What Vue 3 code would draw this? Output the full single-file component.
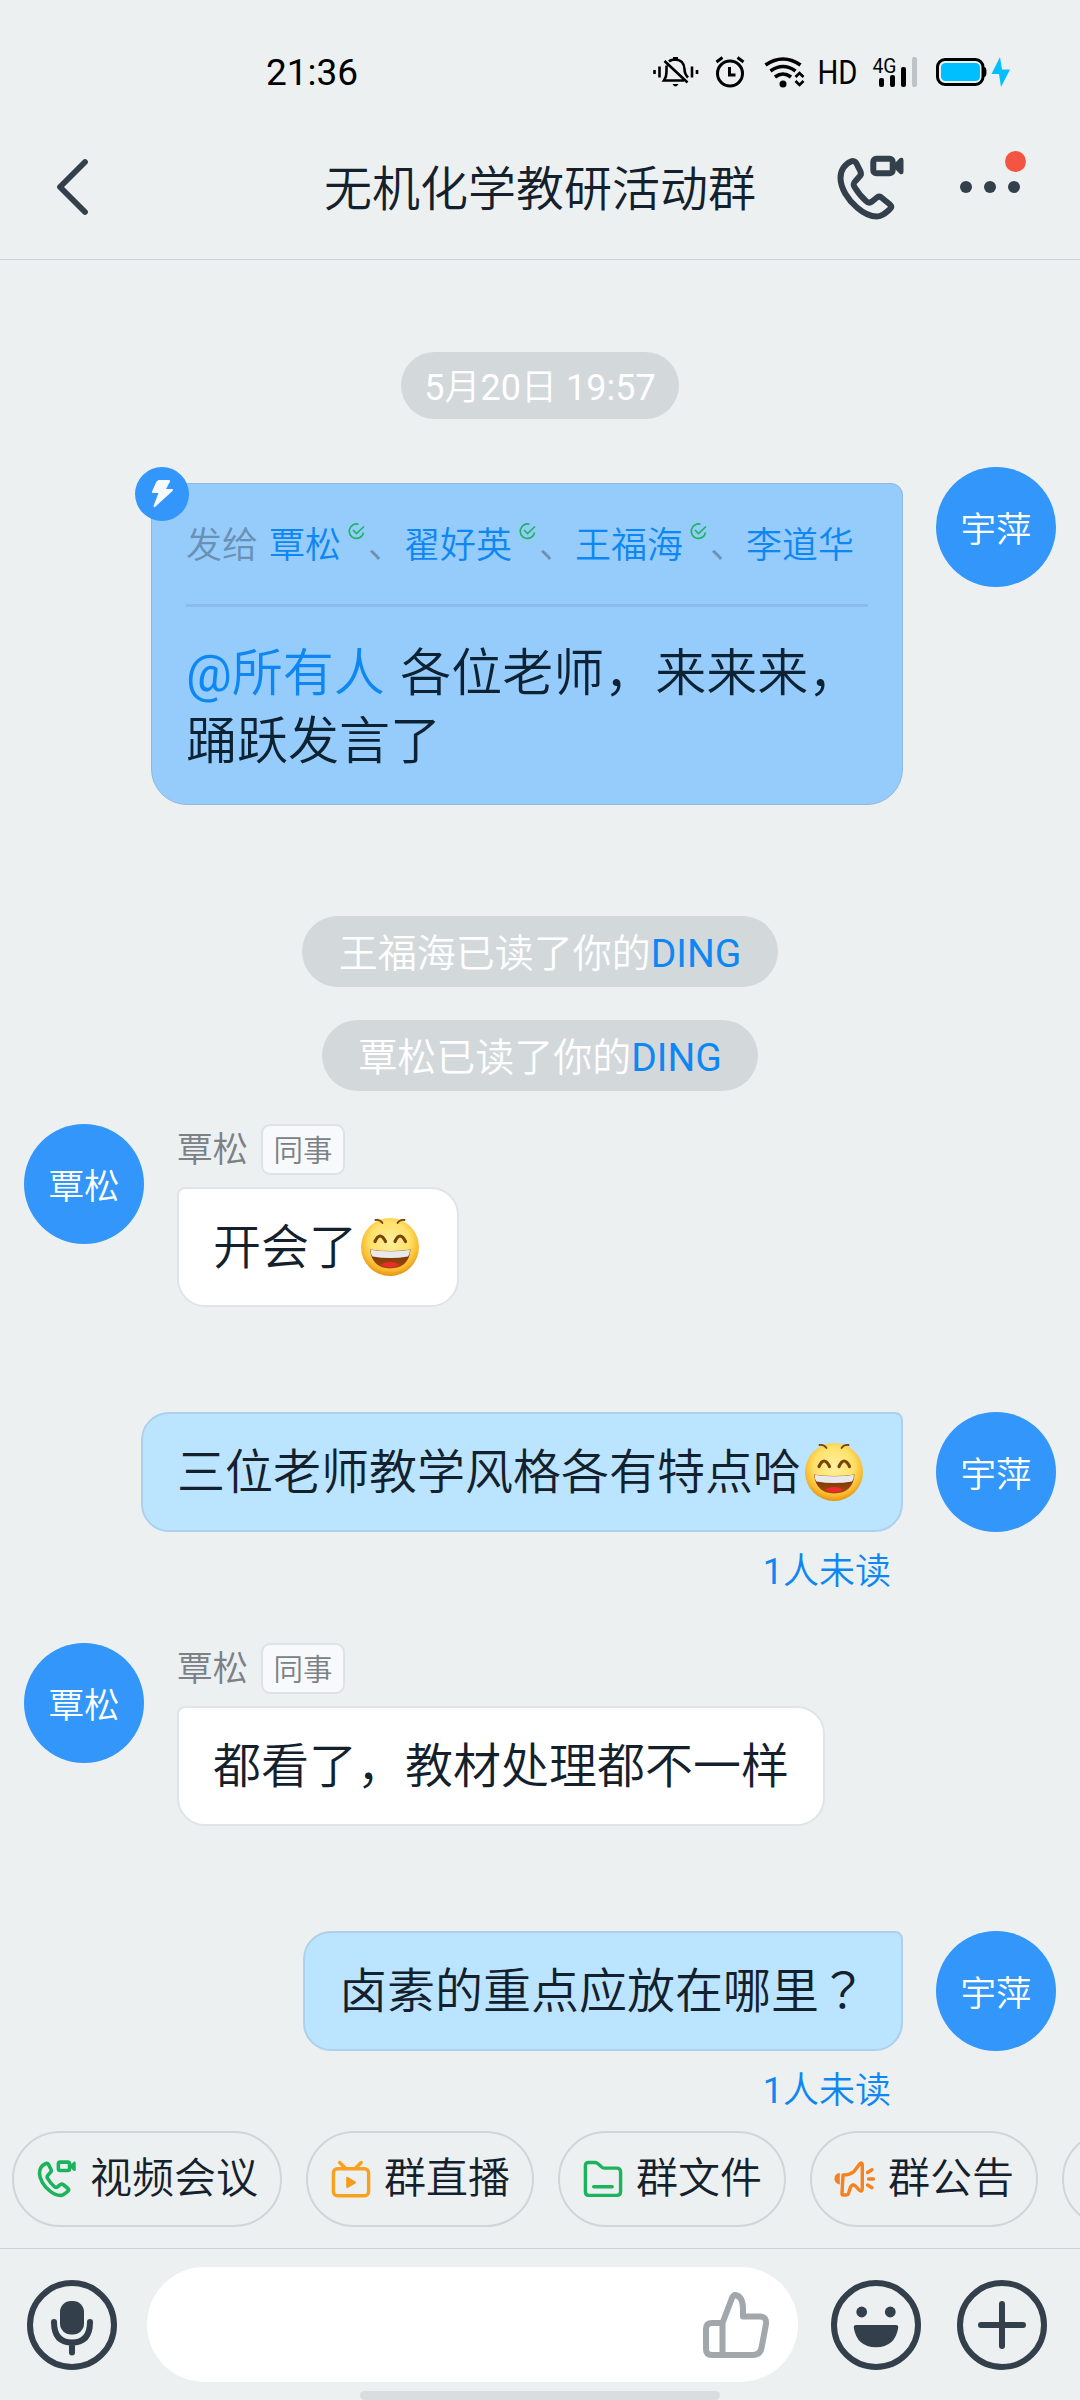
<script setup>
const recipients = [
  { name: '覃松', read: true },
  { name: '翟好英', read: true },
  { name: '王福海', read: true },
  { name: '李道华', read: false },
]

const notices = ['王福海已读了你的', '覃松已读了你的']

const messages = [
  { mine: false, name: '覃松', text: '开会了', emoji: true },
  { mine: true, name: '宇萍', text: '三位老师教学风格各有特点哈', emoji: true },
  { mine: false, name: '覃松', text: '都看了，教材处理都不一样', emoji: false },
  { mine: true, name: '宇萍', text: '卤素的重点应放在哪里', mark: '？', emoji: false },
]

const actions = [
  { icon: 'call', label: '视频会议' },
  { icon: 'live', label: '群直播' },
  { icon: 'file', label: '群文件' },
  { icon: 'notice', label: '群公告' },
  { icon: '', label: '' },
]
</script>

<template>
  <div class="screen">
    <header class="top">
      <div class="status">
        <span class="clock">21:36</span>
        <svg class="status-icons" width="360" height="34" viewBox="0 0 360 34">
          <!-- muted bell -->
          <g fill="none" stroke="#000" stroke-width="2.6">
            <path d="M1.5 14v4M6.5 10.500v11M39 10.500v11M44 14v4" />
            <path d="M16 5.500Q18 3.500 22.500 3.500Q31 4 31.500 13Q31.500 18 35 21.500M13.500 9.500V16Q13.500 21 11 24.500H31M11.500 5L34.500 26.500" />
          </g>
          <path d="M20 1h5v3h-5zM19.500 28h6q-3 5-6 0z" fill="#000" />
          <!-- alarm -->
          <g fill="none" stroke="#000" stroke-width="3">
            <circle cx="77" cy="17.500" r="12.500" />
            <path d="M76.500 11v8h6M63.500 6l6-4.500M90.500 6l-6-4.500" />
          </g>
          <!-- wifi -->
          <g fill="none" stroke="#000" stroke-width="3.600">
            <path d="M112.500 9Q130 -3 147.500 9M117.500 15Q130 6 142.500 15M122 21Q130 15 138 21" />
            <path d="M142.500 21l4-4 4 4M142.500 25l4 4 4-4" stroke-width="2.600" />
          </g>
          <circle cx="130" cy="28" r="3.500" />
          <text x="164.500" y="28.300" font-size="33.500" textLength="40" lengthAdjust="spacingAndGlyphs">HD</text>
          <!-- signal -->
          <text x="219.500" y="16.500" font-size="20.500" textLength="24" lengthAdjust="spacingAndGlyphs">4G</text>
          <rect x="226" y="22" width="5" height="9" rx="2" />
          <rect x="237" y="19" width="5" height="12" rx="2" />
          <rect x="248" y="11" width="5" height="20" rx="2" />
          <rect x="259" y="1" width="5" height="30" rx="2" fill="#bec3c5" />
          <!-- battery -->
          <rect x="284.500" y="3.500" width="45.500" height="25" rx="7.500" fill="none" stroke="#000" stroke-width="3" />
          <path d="M331 11q2.500 0 2.500 5t-2.500 5z" />
          <rect x="288" y="7" width="39" height="18" rx="4.500" fill="#00bfff" />
          <path d="M347 1l-8.500 17h7.500l2 13 9-17.500h-8z" fill="#00bfff" />
        </svg>
      </div>
      <div class="nav">
        <svg class="back" width="36" height="60" viewBox="0 0 36 60">
          <path d="M31 5L6 30L31 55" fill="none" stroke="#333f4b" stroke-width="5.800" stroke-linecap="round" stroke-linejoin="round" />
        </svg>
        <h1>无机化学教研活动群</h1>
        <svg class="nav-call" width="68" height="66" viewBox="0 0 68 66">
          <path class="ink" d="M14 6.500C8 9 3.500 15 3.500 23C3.500 33 11 45 20 52.500C28 59.500 34 61.500 40 61.500C45 61.500 48.500 58 53 54C54.500 52.500 54.500 51 53 49.500L45 43C43.500 41.500 41.500 41.500 40 42.500L35 46.500C33 48 31 48 29 46C25 42.500 20 36 17.500 32C16 29.500 16.500 28 18.500 26L22.500 21.500C24 20 24.300 18 23.300 16L19.500 8.500C18.300 6.300 16 5.500 14 6.500Z" />
          <rect class="ink" x="36.300" y="3.700" width="19.400" height="14.600" rx="3" />
          <path d="M58 8l5-5q3.500-1 3.500 2v12q0 3-3.500 2l-5-5z" fill="#333f4b" />
        </svg>
        <div class="more">
          <i></i><i></i><i></i>
          <b></b>
        </div>
      </div>
    </header>

    <main class="chat">
      <div class="pill time"><span class="latin">5</span>月<span class="latin">20</span>日<span class="latin"> 19:57</span></div>

      <section class="row ding-row">
        <div class="ding">
          <span class="ding-badge">
            <svg width="54" height="54" viewBox="0 0 54 54">
              <path d="M23.500 13h10.500q1.500 0 1 1.500l-4 7.500h6.500q1 .5 0 2L20 40q-1.500 .5-1.500-1l5-13h-5.500q-1.500 0-1-1.500l4.500-10z" fill="#f6faff" />
            </svg>
          </span>
          <div class="to">
            <span class="to-label">发给</span>
            <template v-for="(r, i) in recipients" :key="r.name">
              <span class="to-name">{{ r.name }}</span>
              <svg v-if="r.read" class="tick" width="17" height="17" viewBox="0 0 17 17">
                <path d="M10.500 1.300A7.200 7.200 0 1 0 15.500 9.500M5 7l3.500 3.500L16 3.500" fill="none" stroke="#1bb563" stroke-width="1.700" />
              </svg>
              <span v-if="i < recipients.length - 1" class="sep">、</span>
            </template>
          </div>
          <p class="ding-text"><em><span class="latin">@</span>所有人</em> 各位老师，来来来，<br>踊跃发言了</p>
        </div>
        <div class="avatar">宇萍</div>
      </section>

      <div v-for="n in notices" :key="n" class="pill notice">{{ n }}<em class="latin">DING</em></div>

      <section v-for="(m, i) in messages" :key="i" class="row" :class="m.mine ? 'mine' : 'theirs'">
        <div class="avatar">{{ m.name }}</div>
        <div class="body">
          <div v-if="!m.mine" class="who">
            <span>{{ m.name }}</span>
            <span class="tag">同事</span>
          </div>
          <div class="bubble">
            <span class="words">{{ m.text }}<span v-if="m.mark" class="mark">{{ m.mark }}</span></span>
            <svg v-if="m.emoji" class="emoji" width="58" height="58" viewBox="0 0 58 58">
              <defs>
                <radialGradient id="face" cx=".5" cy=".4" r=".62">
                  <stop offset="0" stop-color="#fff0a0" />
                  <stop offset=".55" stop-color="#ffe169" />
                  <stop offset=".82" stop-color="#f8b82c" />
                  <stop offset="1" stop-color="#df8a0c" />
                </radialGradient>
                <linearGradient id="mouth" x1="0" y1="0" x2="0" y2="1">
                  <stop offset="0" stop-color="#6b3205" />
                  <stop offset="1" stop-color="#a5480c" />
                </linearGradient>
              </defs>
              <circle cx="29" cy="29" r="29" fill="url(#face)" />
              <g fill="none" stroke="#7a4305" stroke-linecap="round">
                <path d="M14.500 2Q19 1 21.500 5M43.500 2Q39 1 36.500 5" stroke-width="1.800" />
                <path d="M14 23.500Q19 12.500 24.500 23.500M34 23.500Q39 12.500 44.500 23.500" stroke-width="3.200" />
              </g>
              <path d="M9 31.500Q29 34.500 49.500 31.500Q48 50 29 50.500Q11 50 9 31.500Z" fill="url(#mouth)" />
              <path d="M9.500 31.700Q29 34.800 49 31.700Q49 36 47 38.500Q29 41.500 11.500 38.500Q9.500 36 9.500 31.700Z" fill="#e9e9ec" />
              <path d="M20 47Q23 44 29 44Q35 44 38 47Q29 51.500 20 47Z" fill="#ee2b2b" />
            </svg>
          </div>
          <div v-if="m.mine" class="unread"><span class="latin">1</span>人未读</div>
        </div>
      </section>
    </main>

    <nav class="actions">
      <div v-for="(a, i) in actions" :key="i" class="chip">
        <svg v-if="a.icon === 'call'" width="42" height="42" viewBox="-2.600 -3.500 73 73">
          <g fill="none" stroke="#1bb45c" stroke-width="6.200" stroke-linejoin="round">
            <path d="M14 6.500C8 9 3.500 15 3.500 23C3.500 33 11 45 20 52.500C28 59.500 34 61.500 40 61.500C45 61.500 48.500 58 53 54C54.500 52.500 54.500 51 53 49.500L45 43C43.500 41.500 41.500 41.500 40 42.500L35 46.500C33 48 31 48 29 46C25 42.500 20 36 17.500 32C16 29.500 16.500 28 18.500 26L22.500 21.500C24 20 24.300 18 23.300 16L19.500 8.500C18.300 6.300 16 5.500 14 6.500Z" />
            <rect x="36.300" y="3.700" width="19.400" height="14.600" rx="3" />
          </g>
          <path d="M58 8l5-5q3.500-1 3.500 2v12q0 3-3.500 2l-5-5z" fill="#1bb45c" />
        </svg>
        <svg v-else-if="a.icon === 'live'" width="42" height="42" viewBox="-1.700 -2.500 42 42">
          <g fill="none" stroke="#f7a11e" stroke-width="3.400" stroke-linecap="round" stroke-linejoin="round">
            <rect x="1.700" y="8.200" width="35.200" height="27" rx="4" />
            <path d="M8 2l6 6M29.500 2l-6 6" />
          </g>
          <path d="M14.500 17.500q0-1.800 1.800-1l7.500 4.600q1.300 1 0 2l-7.500 4.200q-1.800 .7-1.800-1z" fill="#f79a1e" />
        </svg>
        <svg v-else-if="a.icon === 'file'" width="42" height="42" viewBox="-1.700 -2.500 42 42">
          <path d="M1.700 5.200Q1.700 2 4.900 2H11.500Q13 2 14 3L18 6.600Q19 7.600 20.500 7.600H33Q36.900 7.600 36.900 11.500V31Q36.900 34.900 33 34.900H5Q1.700 34.900 1.700 31ZM10 26.300H28.500" fill="none" stroke="#1bb45c" stroke-width="3.400" stroke-linecap="round" stroke-linejoin="round" />
        </svg>
        <svg v-else-if="a.icon === 'notice'" width="42" height="42" viewBox="0 -2.500 42 42">
          <g fill="none" stroke="#f5811f" stroke-width="3.400" stroke-linecap="round" stroke-linejoin="round">
            <path d="M9 14.500Q16 14.500 20 11L26 3Q28 1.500 28.300 4V28Q28.300 32 25 29.500L21.500 25.500Q18.500 23 16.500 26.500L14.500 33Q14 34.500 12.500 34.500H9.500Q8 34.500 8 33Z" />
            <path d="M33.500 12l4.500-2.800M34.500 18.500h5M33.500 24.500l4.500 2.700" />
          </g>
          <path d="M5.800 12.500v11.500Q.5 23 .5 18T5.800 12.500z" fill="#f5811f" />
        </svg>
        <span>{{ a.label }}</span>
      </div>
    </nav>

    <footer class="composer">
      <svg width="90" height="90" viewBox="0 0 90 90">
        <circle class="ink" cx="45" cy="45" r="42" />
        <rect x="33" y="21" width="24" height="33.500" rx="11" fill="#333f4b" />
        <path class="ink round" d="M27 42Q27 62.500 45 62.500Q63 62.500 63 42M45 63v9.500" />
      </svg>
      <div class="input">
        <svg width="66" height="66" viewBox="0 0 66 66">
          <path d="M19.500 31H9Q3 31 3 37V57Q3 63 9 63H50Q57 63 58.500 56L63 32Q64 25 57 24.500H40V17Q40 4 32 3Q30.500 3 29 6L19.500 31V63" fill="none" stroke="#a1a7ab" stroke-width="6" stroke-linejoin="round" />
        </svg>
      </div>
      <svg class="face-btn" width="90" height="90" viewBox="0 0 90 90">
        <circle class="ink" cx="45" cy="45" r="42" />
        <circle cx="30.700" cy="32" r="5.400" fill="#333f4b" />
        <circle cx="59.300" cy="32" r="5.400" fill="#333f4b" />
        <path d="M25 45H65Q67.500 45 67.200 48Q64 67 45 67.300Q26 67 22.800 48Q22.500 45 25 45Z" fill="#333f4b" />
      </svg>
      <svg class="plus-btn" width="90" height="90" viewBox="0 0 90 90">
        <circle class="ink" cx="45" cy="45" r="42" />
        <path class="ink round" d="M45 24V66M24 45H66" />
      </svg>
      <div class="home"></div>
    </footer>
  </div>
</template>

<style>
body {
  margin: 0;
  background: #ecf0f1;
}
</style>

<style scoped>
.screen {
  display: flex;
  flex-direction: column;
  width: 1080px;
  height: 2400px;
  overflow: hidden;
  background: #ecf0f1;
  color: #14212c;
  font-family: Roboto, "Noto Sans CJK SC", sans-serif;
  font-weight: 350;
}
svg {
  display: block;
  flex: none;
  overflow: visible;
}
em {
  font-style: normal;
  color: #0f87f2;
}
.latin,
.clock,
svg text {
  font-weight: 400;
}
.ink {
  fill: none;
  stroke: #333f4b;
  stroke-width: 6;
  stroke-linejoin: round;
}
.ink.round {
  stroke-linecap: round;
}

.top {
  box-sizing: border-box;
  height: 260px;
  border-bottom: 1px solid #cdd2d5;
}
.status {
  display: flex;
  align-items: center;
  height: 144px;
  box-sizing: border-box;
  padding-left: 266px;
}
.clock {
  width: 387px;
  font-size: 37px;
  color: #000;
}
.status-icons {
  margin-top: 2px;
}
.nav {
  display: flex;
  align-items: center;
  height: 86px;
  padding-left: 54px;
}
h1 {
  width: 432px;
  margin: 6px 81px 0 234px;
  font-size: 48px;
  line-height: 70px;
  font-weight: inherit;
  white-space: nowrap;
}
.nav-call {
  margin-top: 1px;
}
.more {
  position: relative;
  display: flex;
  gap: 12px;
  margin-left: 55px;
}
.more i {
  width: 12px;
  height: 12px;
  border-radius: 50%;
  background: #333f4b;
}
.more b {
  position: absolute;
  right: -6px;
  bottom: 21px;
  width: 21px;
  height: 21px;
  border-radius: 50%;
  background: #f25643;
}

.chat {
  display: flex;
  flex-direction: column;
  align-items: center;
  box-sizing: border-box;
  height: 1859px;
  padding-top: 92px;
  overflow: hidden;
}
.pill {
  flex: none;
  border-radius: 36px;
  background: #d3d8db;
  color: #fff;
  text-align: center;
  white-space: nowrap;
}
.time {
  width: 278px;
  height: 67px;
  font-size: 36px;
  line-height: 73px;
}
.notice {
  height: 71px;
  margin-bottom: 33px;
  padding: 0 36.5px;
  font-size: 39px;
  line-height: 77px;
}

.row {
  display: flex;
  align-items: flex-start;
  flex: none;
  box-sizing: border-box;
  width: 1080px;
  padding: 0 24px;
}
.avatar {
  flex: none;
  width: 120px;
  height: 120px;
  border-radius: 50%;
  background: #3296fa;
  color: #fff;
  font-size: 35.5px;
  line-height: 127px;
  text-align: center;
}
.ding-row {
  justify-content: flex-end;
  gap: 33px;
  margin: 48px 0 111px;
}
.ding {
  position: relative;
  box-sizing: border-box;
  width: 752px;
  height: 322px;
  margin-top: 16px;
  padding: 0 34px;
  border: 1px solid #8fb8dc;
  border-radius: 36px 12px 36px 36px;
  background: #96ccfc;
}
.ding-badge {
  position: absolute;
  left: -17px;
  top: -17px;
  border-radius: 50%;
  background: #3296fa;
}
.to {
  display: flex;
  align-items: center;
  box-sizing: border-box;
  height: 123px;
  padding-top: 4px;
  border-bottom: 3px solid #8bbdec;
  font-size: 36px;
  line-height: 50px;
  white-space: nowrap;
}
.to-label {
  margin-right: 11px;
  color: #6a90b3;
}
.to-name {
  color: #0f87f2;
}
.tick {
  margin: 0 3px 29px 7px;
}
.sep {
  color: #6a90b3;
}
.ding-text {
  margin: 33px 0 0;
  font-size: 51px;
  line-height: 67.500px;
  color: #0d2233;
  white-space: nowrap;
}
.ding-text em {
  margin-right: 3px;
}

.theirs {
  height: 288px;
}
.theirs .body {
  margin-left: 33px;
}
.mine {
  flex-direction: row-reverse;
  height: 231px;
}
.mine .body {
  display: flex;
  flex-direction: column;
  align-items: flex-end;
  margin-right: 33px;
}
.who {
  display: flex;
  align-items: flex-start;
  height: 63px;
  color: #7b8187;
  font-size: 35.5px;
  line-height: 52px;
}
.tag {
  box-sizing: border-box;
  width: 84px;
  height: 51px;
  margin-left: 13px;
  border: 2px solid #dfe2e4;
  border-radius: 9px;
  background: #f7f9fb;
  font-size: 29.500px;
  line-height: 50px;
  text-align: center;
}
.bubble {
  display: flex;
  align-items: center;
  box-sizing: border-box;
  width: fit-content;
  height: 120px;
  padding: 0 34px;
  border: 2px solid #e0e4e6;
  border-radius: 8px 28px 28px 28px;
  background: #fff;
  font-size: 48px;
  white-space: nowrap;
}
.mine .bubble {
  border-color: #aed0eb;
  border-radius: 28px 8px 28px 28px;
  background: #bae4ff;
}
.words {
  height: 70px;
  margin-top: 1px;
  line-height: 70px;
}
.mark {
  font-family: "Noto Sans CJK TC", sans-serif;
  line-height: 0;
}
.emoji {
  margin: 0 4px;
}
.unread {
  margin: 14px 12px 0 0;
  color: #0f87f2;
  font-size: 36px;
  line-height: 52px;
}

.actions {
  display: flex;
  flex: none;
  gap: 24px;
  box-sizing: border-box;
  height: 129px;
  padding: 12px;
}
.chip {
  display: flex;
  align-items: center;
  flex: none;
  gap: 12px;
  box-sizing: border-box;
  min-width: 120px;
  height: 96px;
  padding: 0 22px;
  border: 2px solid #d1d5d7;
  border-radius: 48px;
  font-size: 42px;
  line-height: 60px;
  white-space: nowrap;
}
.chip span {
  margin-top: -1px;
}
.composer {
  position: relative;
  display: flex;
  align-items: center;
  flex: none;
  box-sizing: border-box;
  height: 152px;
  padding: 18px 27px 18px;
  border-top: 1px solid #cdd2d5;
}
.input {
  display: flex;
  align-items: center;
  justify-content: flex-end;
  box-sizing: border-box;
  width: 651px;
  height: 115px;
  margin: 0 33px 0 30px;
  padding-right: 29px;
  border-radius: 58px;
  background: #fff;
}
.plus-btn {
  margin-left: 36px;
}
.home {
  position: absolute;
  left: 360px;
  bottom: 0;
  width: 360px;
  height: 9px;
  border-radius: 5px;
  background: #d9dddf;
}
</style>
